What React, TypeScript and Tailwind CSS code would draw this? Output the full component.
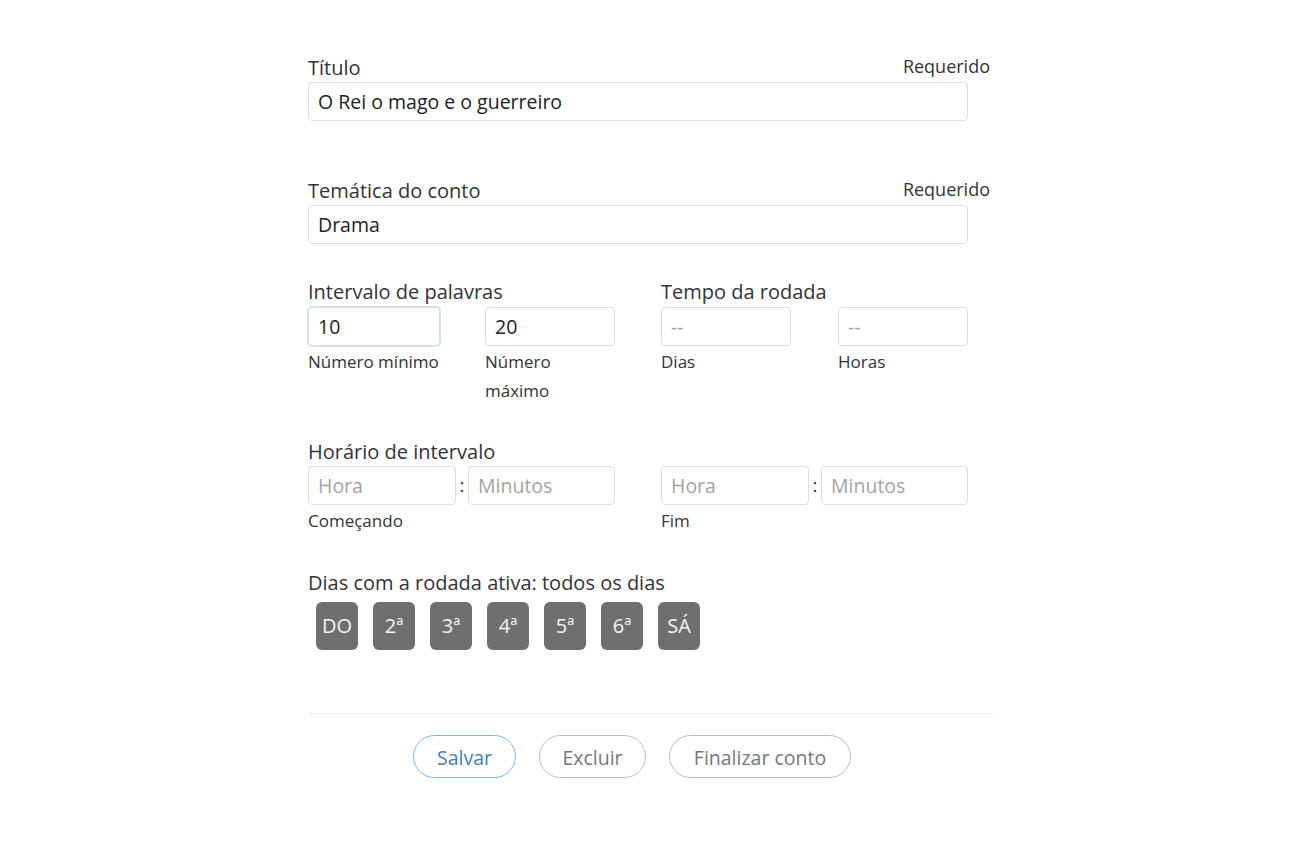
import { useState } from "react";

const days = ["DO", "2ª", "3ª", "4ª", "5ª", "6ª", "SÁ"];

const inputBase =
  "block h-[39px] rounded-[4px] border border-[#dedede] bg-white px-[9px] text-[19.5px] text-[#222] placeholder:text-[#a3a3a3] outline-none";

function Field({ label, value, required }: { label: string; value: string; required?: boolean }) {
  return (
    <div>
      <div className="flex items-end justify-between">
        <span className="text-[20px] leading-6 text-[#333]">{label}</span>
        {required && <span className="self-start text-[18px] leading-5 text-[#333]">Requerido</span>}
      </div>
      <input className={`${inputBase} mt-[2px] w-[660px]`} defaultValue={value} />
    </div>
  );
}

function SmallInput({ value, placeholder, focused, hint }: { value?: string; placeholder?: string; focused?: boolean; hint: string }) {
  return (
    <div>
      <input
        className={`${inputBase} ${focused ? "w-[132px] border-[#77aee3] shadow-[0_0_0_1px_#cfe3f6]" : "w-[130px]"}`}
        defaultValue={value}
        placeholder={placeholder}
      />
      <p className="mt-[1px] w-[132px] text-[17px] leading-[29px] text-[#333]">{hint}</p>
    </div>
  );
}

function TimePair({ hint }: { hint: string }) {
  return (
    <div>
      <div className="flex items-center">
        <input className={`${inputBase} w-[148px]`} placeholder="Hora" />
        <span className="w-[12px] text-center text-[19px] text-[#333]">:</span>
        <input className={`${inputBase} w-[147px]`} placeholder="Minutos" />
      </div>
      <p className="mt-[1px] text-[17px] leading-[29px] text-[#333]">{hint}</p>
    </div>
  );
}

export default function App() {
  const [active] = useState(days);

  return (
    <div className="min-h-screen bg-white font-['Open_Sans',sans-serif]">
      <div className="mx-auto w-[682px] pt-[56px]">
        <Field label="Título" value="O Rei o mago e o guerreiro" required />

        <div className="mt-[58px]">
          <Field label="Temática do conto" value="Drama" required />
        </div>

        {/* Intervalo de palavras / Tempo da rodada */}
        <div className="mt-[36px] grid w-[660px] grid-cols-2 gap-x-[46px]">
          <div>
            <p className="text-[20px] leading-6 text-[#333]">Intervalo de palavras</p>
            <div className="mt-[3px] flex gap-x-[45px]">
              <SmallInput value="10" focused hint="Número mínimo" />
              <SmallInput value="20" hint="Número máximo" />
            </div>
          </div>
          <div>
            <p className="text-[20px] leading-6 text-[#333]">Tempo da rodada</p>
            <div className="mt-[3px] flex gap-x-[45px]">
              <SmallInput placeholder="--" hint="Dias" />
              <SmallInput placeholder="--" hint="Horas" />
            </div>
          </div>
        </div>

        {/* Horário de intervalo */}
        <div className="mt-[35px] w-[660px]">
          <p className="text-[20px] leading-6 text-[#333]">Horário de intervalo</p>
          <div className="mt-[2px] grid grid-cols-2 gap-x-[46px]">
            <TimePair hint="Começando" />
            <TimePair hint="Fim" />
          </div>
        </div>

        {/* Dias ativos */}
        <div className="mt-[36px]">
          <p className="text-[20px] leading-6 text-[#333]">Dias com a rodada ativa: todos os dias</p>
          <div className="mt-[7px] flex gap-[15px] pl-[8px]">
            {active.map((d) => (
              <button
                key={d}
                className="flex h-[48px] w-[42px] items-center justify-center rounded-[6px] bg-[#6f6f6f] text-[20px] text-[#f4f4f4]"
              >
                {d}
              </button>
            ))}
          </div>
        </div>

        <div className="mt-[63px] h-px w-[685px] bg-[#eeeeee]" />

        <div className="mt-[21px] flex gap-[23px] pl-[105px]">
          <button className="h-[43px] w-[103px] rounded-full border border-[#7fb3e6] pt-[2px] text-[19.5px] text-[#3b7fc4]">
            Salvar
          </button>
          <button className="h-[43px] w-[107px] rounded-full border border-[#bdbdbd] pt-[2px] text-[19.5px] text-[#777]">
            Excluir
          </button>
          <button className="h-[43px] w-[182px] rounded-full border border-[#bdbdbd] pt-[2px] text-[19.5px] text-[#777]">
            Finalizar conto
          </button>
        </div>
      </div>
    </div>
  );
}
